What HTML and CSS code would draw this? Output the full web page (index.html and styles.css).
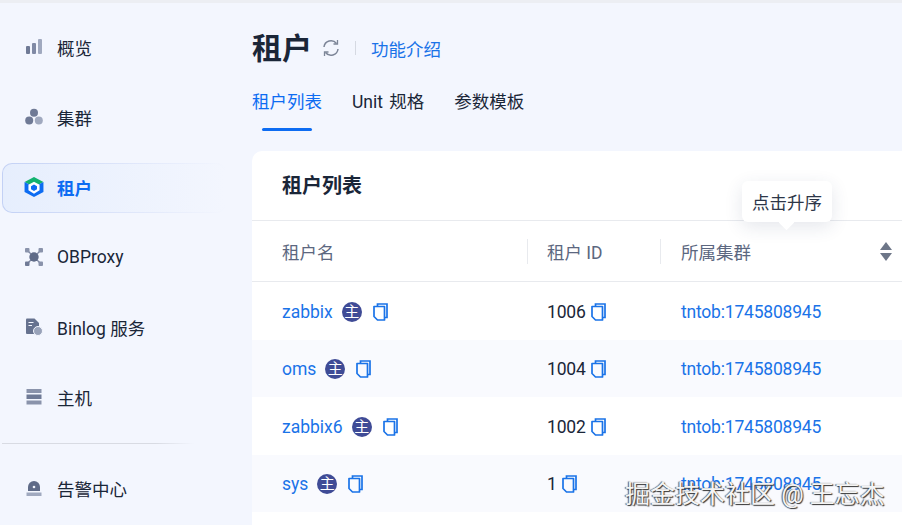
FILE: index.html
```html
<!DOCTYPE html>
<html lang="zh-CN">
<head>
  <meta charset="UTF-8">
  <title>租户</title>
  <link rel="stylesheet" href="styles.css">
</head>
<body>
  <svg class="defs" width="0" height="0">
    <symbol id="copy" viewBox="0 0 15 18">
      <path d="M4.500 3.500V1h9.500v13.500H11.500" fill="none" stroke="currentColor" stroke-width="1.700"/>
      <path d="M1 3.500h10.500V17H4.500L1 13.500z" fill="none" stroke="currentColor" stroke-width="1.700" stroke-linejoin="round"/>
    </symbol>
  </svg>

  <div class="app">
    <nav class="side">
      <a class="side-item">
        <svg class="side-icon" viewBox="0 0 18 18"><rect x="1" y="8" width="4" height="8" rx="1" fill="#6f7a96"/><rect x="7" y="5" width="4" height="11" rx="1" fill="#808aa5"/><rect x="13" y="1" width="4" height="15" rx="1" fill="#a0a9bf"/></svg>
        <span>概览</span>
      </a>
      <a class="side-item">
        <svg class="side-icon" viewBox="0 0 18 18"><circle cx="9" cy="4.800" r="4" fill="#6f7a96"/><circle cx="4.200" cy="12.500" r="4" fill="#6f7a96"/><circle cx="13.800" cy="12.500" r="4" fill="#a0a9bf"/></svg>
        <span>集群</span>
      </a>
      <a class="side-item active">
        <svg class="side-icon" viewBox="0 0 18 18"><path d="M9 0l8.500 4.500L9 9 .5 4.500z" fill="#12b26f"/><path d="M.5 4.500L9 9l8.500-4.500v9L9 18 .5 13.500z" fill="#0d6cf2"/><path d="M9 4.200l5 2.800v5L9 15l-5-3V7z" fill="#fff"/><path d="M9 6.800l2.700 1.500v2.700L9 12.700 6.300 11V8.300z" fill="#0d6cf2"/></svg>
        <span>租户</span>
      </a>
      <a class="side-item">
        <svg class="side-icon" viewBox="0 0 20 20"><path d="M3 3l14 14M17 3L3 17" stroke="#7f89a4" stroke-width="1.500"/><circle cx="10" cy="10" r="5.200" fill="#5f6b88"/><rect x="0" y="0" width="5" height="5" rx="1" fill="#8a93ab"/><rect x="15" y="0" width="5" height="5" rx="1" fill="#8a93ab"/><rect x="0" y="15" width="5" height="5" rx="1" fill="#6f7a96"/><rect x="15" y="15" width="5" height="5" rx="1" fill="#8a93ab"/></svg>
        <span>OBProxy</span>
      </a>
      <a class="side-item">
        <svg class="side-icon" viewBox="0 0 18 18"><path d="M1 1.500Q1 .5 2 .5h7.500L14 5v11H2q-1 0-1-1z" fill="#66728f"/><path d="M3.500 4.500h5M3.500 7.500h3.500" stroke="#f3f6fe" stroke-width="1.200"/><circle cx="13" cy="13" r="4.500" fill="#98a2b9" stroke="#f3f6fe" stroke-width="1"/></svg>
        <span>Binlog 服务</span>
      </a>
      <a class="side-item">
        <svg class="side-icon" viewBox="0 0 18 18"><rect x="1.500" y="1" width="15" height="4" fill="#8a93ab"/><rect x="1.500" y="6.500" width="15" height="4.500" fill="#6f7a96"/><rect x="1.500" y="12.500" width="15" height="4" fill="#8a93ab"/></svg>
        <span>主机</span>
      </a>
      <div class="side-line"></div>
      <a class="side-item">
        <svg class="side-icon" viewBox="0 0 18 18"><path d="M3 12V8a6 6 0 0 1 12 0v4z" fill="#5f6b88"/><circle cx="9" cy="8" r="1.300" fill="#f3f6fe"/><rect x="1.500" y="13.500" width="15" height="3.500" fill="#a0a9bf"/></svg>
        <span>告警中心</span>
      </a>
    </nav>

    <main class="main">
      <div class="title-row">
        <h1>租户</h1>
        <svg class="refresh" viewBox="0 0 18 18" fill="none" stroke="#7d8698" stroke-width="1.500"><path d="M2 8a7 7 0 0 1 12.500-3.500M16 10a7 7 0 0 1-12.500 3.500"/><path d="M15.500 1v4h-4M2.500 17v-4h4" stroke-width="1.300"/></svg>
        <i class="title-sep"></i>
        <a class="link">功能介绍</a>
      </div>
      <div class="tabs">
        <a class="tab on">租户列表</a>
        <a class="tab">Unit 规格</a>
        <a class="tab">参数模板</a>
      </div>

      <section class="card">
        <h2>租户列表</h2>
        <div class="row head">
          <div class="cell">租户名</div>
          <div class="cell">租户 ID</div>
          <div class="cell">所属集群
            <span class="sort"><b class="up"></b><b class="down"></b></span>
          </div>
        </div>
        <div class="row">
          <div class="cell"><a class="link">zabbix</a><span class="badge">主</span><svg class="copy"><use href="#copy"/></svg></div>
          <div class="cell num">1006<svg class="copy near"><use href="#copy"/></svg></div>
          <div class="cell num"><a class="link">tntob:1745808945</a></div>
        </div>
        <div class="row alt">
          <div class="cell"><a class="link">oms</a><span class="badge">主</span><svg class="copy"><use href="#copy"/></svg></div>
          <div class="cell num">1004<svg class="copy near"><use href="#copy"/></svg></div>
          <div class="cell num"><a class="link">tntob:1745808945</a></div>
        </div>
        <div class="row">
          <div class="cell"><a class="link">zabbix6</a><span class="badge">主</span><svg class="copy"><use href="#copy"/></svg></div>
          <div class="cell num">1002<svg class="copy near"><use href="#copy"/></svg></div>
          <div class="cell num"><a class="link">tntob:1745808945</a></div>
        </div>
        <div class="row alt">
          <div class="cell"><a class="link">sys</a><span class="badge">主</span><svg class="copy"><use href="#copy"/></svg></div>
          <div class="cell num">1<svg class="copy near"><use href="#copy"/></svg></div>
          <div class="cell num"><a class="link">tntob:1745808945</a></div>
        </div>
      </section>
    </main>
  </div>

  <div class="tooltip">点击升序</div>
  <div class="watermark">掘金技术社区 @ 王忘杰</div>
</body>
</html>
```

FILE: styles.css
```css
* { box-sizing: border-box; }
body { margin: 0; height: 525px; overflow: hidden; position: relative; background: #f3f6fe; color: #1a2638; font: 17.5px Roboto, "Noto Sans CJK SC", sans-serif; border-top: 3px solid #eceef3; }
.defs { position: absolute; }
.app { display: flex; height: 522px; }

.side { width: 252px; flex: none; padding: 20px 0 0 2px; }
.side-item { display: flex; align-items: center; gap: 14px; width: 224px; height: 50px; margin-bottom: 20px; padding: 0 0 2px 22px; border: 1px solid transparent; border-radius: 10px; }
.side-item.active { color: #0d6cf2; font-weight: 700; background: linear-gradient(90deg, #e6eefd, #f3f6fe) padding-box, linear-gradient(90deg, #c3d1f5, #f3f6fe) border-box; }
.side-icon { width: 18px; height: 18px; flex: none; }
.active .side-icon { width: 20px; height: 20px; margin: 0 -1px; }
.side-line { width: 192px; height: 1px; margin: 0 0 20px; background: linear-gradient(90deg, #d8dbe3 80%, #f3f6fe); }

.main { width: 650px; flex: none; }
.title-row { display: flex; align-items: center; height: 42px; margin-top: 24px; }
h1 { margin: 0; padding-top: 1px; font-size: 30px; font-weight: 700; line-height: 42px; }
.refresh { width: 18px; height: 18px; margin-left: 10px; }
.title-sep { width: 1px; height: 14px; margin: 0 15px; background: #d5d9e2; }
.link { color: #1a73e8; }
.tabs { display: flex; gap: 30px; margin-top: 15px; }
.tab { position: relative; height: 47px; padding-top: 6px; line-height: 24px; word-spacing: 2px; }
.tab.on { color: #0d6cf2; }
.tab.on::after { content: ""; position: absolute; left: 10px; right: 10px; bottom: 0; height: 3px; background: #0d6cf2; border-radius: 2px; }

.card { margin-top: 20px; height: 400px; background: #fff; border-radius: 10px 0 0 0; }
h2 { margin: 0; height: 70px; padding: 2px 0 0 30px; font-size: 20px; font-weight: 700; line-height: 66px; border-bottom: 1px solid #e8eaee; }
.row { display: grid; grid-template-columns: 275px 133px 1fr; height: 57.500px; }
.row.alt { background: #f9fafe; }
.row.head { height: 61px; color: #5c6780; border-bottom: 1px solid #e8eaee; }
.cell { display: flex; align-items: center; padding: 2px 0 0 20px; }
.head .cell { padding-top: 0; position: relative; }
.cell:first-child { padding-left: 30px; }
.cell:last-child { padding-left: 21px; }
.num { letter-spacing: -.2px; }
.head .cell + .cell::before { content: ""; position: absolute; left: 0; top: 18px; height: 25px; width: 1px; background: #e8eaee; }
.badge { width: 20px; height: 20px; margin: 0 11px 0 9px; flex: none; border-radius: 50%; background: #3f4b96; color: #fff; font-size: 15px; line-height: 20px; text-align: center; }
.copy { width: 15px; height: 18px; color: #1a73e8; flex: none; }
.copy.near { margin-left: 5px; }
.sort { position: absolute; left: 220px; top: 21px; width: 12px; }
.sort b { display: block; width: 0; border: 6px solid transparent; border-top-width: 0; border-bottom: 8px solid #6d7688; }
.sort .down { margin-top: 3px; border-bottom-width: 0; border-top: 8px solid #6d7688; }

.tooltip { position: absolute; left: 742px; top: 178px; width: 90px; height: 41px; background: #fff; border-radius: 6px; text-align: center; line-height: 45px; color: #2d3648; box-shadow: 0 5px 18px rgba(40, 60, 100, .12); }
.tooltip::after { content: ""; position: absolute; left: 39px; top: 36px; width: 11px; height: 11px; background: #fff; transform: rotate(45deg); }
.watermark { position: absolute; left: 625px; top: 471px; color: #f4f4f4; font-size: 25px; white-space: nowrap; text-shadow: 1px 1px 1px #333, -1px 0 1px #555; }
```
